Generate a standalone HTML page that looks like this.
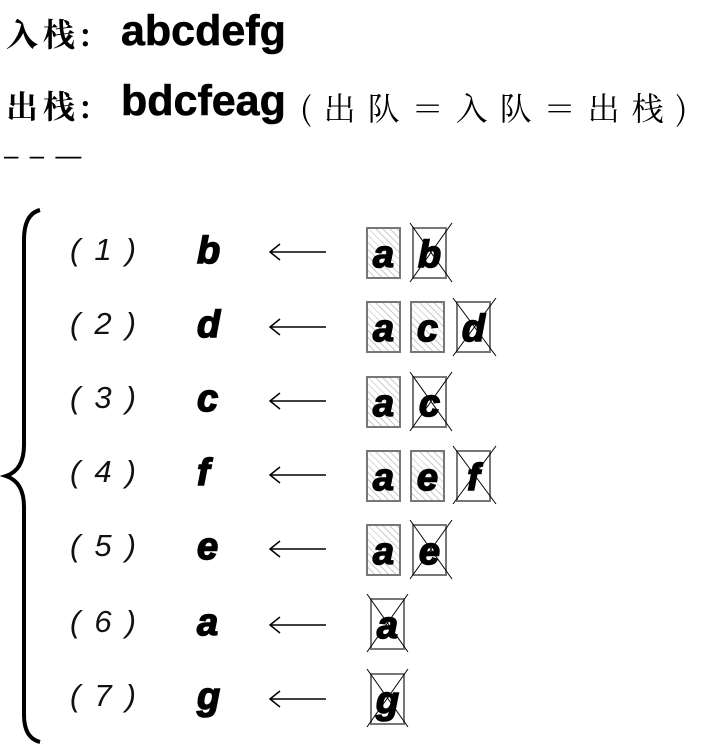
<!DOCTYPE html>
<html><head><meta charset="utf-8"><style>
body{margin:0;width:712px;height:755px;background:#fff;position:relative;overflow:hidden;font-family:"Liberation Sans",sans-serif}
.t{position:absolute;white-space:nowrap}
.h{position:absolute;font-size:43px;font-weight:bold;-webkit-text-stroke:0.6px #000}
.cj{position:absolute;font-family:"Noto Serif CJK SC","Noto Sans CJK SC",serif;font-weight:bold;font-size:32px;letter-spacing:5px;white-space:nowrap}
.lab{position:absolute;left:70px;font-size:31px;font-style:italic;letter-spacing:14px;color:#111}
.let{position:absolute;left:197px;font-size:38px;font-weight:bold;font-style:italic;-webkit-text-stroke:1.5px #000}
.box{position:absolute;width:31px;height:48px;border:2px solid #777;background:repeating-linear-gradient(45deg,#fff 0 4px,#ccc 4px 5px);font-size:38px;font-weight:bold;font-style:italic;text-align:center;line-height:52px;-webkit-text-stroke:1.5px #000}
.x{background:#fff}
</style></head><body>
<div class="cj" style="left:6px;top:10px">入栈:</div><div class="h" style="left:121px;top:7px">abcdefg</div>
<div class="cj" style="left:6px;top:82px">出栈:</div><div class="h" style="left:121px;top:77px">bdcfeag</div>
<div class="cj" style="left:300px;top:84px;font-weight:normal;letter-spacing:12px">(出队＝入队＝出栈)</div>
<div class="t" style="left:4px;top:140px;font-size:26px;letter-spacing:2px">– – —</div>
<div class="lab" style="top:232px">(1)</div><div class="let" style="top:230px">b</div>
<div class="lab" style="top:306px">(2)</div><div class="let" style="top:304px">d</div>
<div class="lab" style="top:380px">(3)</div><div class="let" style="top:378px">c</div>
<div class="lab" style="top:454px">(4)</div><div class="let" style="top:452px">f</div>
<div class="lab" style="top:528px">(5)</div><div class="let" style="top:526px">e</div>
<div class="lab" style="top:604px">(6)</div><div class="let" style="top:602px">a</div>
<div class="lab" style="top:678px">(7)</div><div class="let" style="top:676px">g</div>

<div class="box" style="left:366px;top:227px">a</div><div class="box x" style="left:412px;top:227px">b</div>
<div class="box" style="left:366px;top:301px">a</div><div class="box" style="left:410px;top:301px">c</div><div class="box x" style="left:456px;top:301px">d</div>
<div class="box" style="left:366px;top:376px">a</div><div class="box x" style="left:412px;top:376px">c</div>
<div class="box" style="left:366px;top:450px">a</div><div class="box" style="left:410px;top:450px">e</div><div class="box x" style="left:456px;top:450px">f</div>
<div class="box" style="left:366px;top:524px">a</div><div class="box x" style="left:412px;top:524px">e</div>
<div class="box x" style="left:370px;top:598px">a</div>
<div class="box x" style="left:370px;top:673px">g</div>
<svg style="position:absolute;left:0;top:0" width="712" height="755">
<path d="M40 210 Q24 214 24 240 L24 445 Q24 470 6 476 Q24 482 24 507 L24 715 Q24 738 40 742" stroke="#000" stroke-width="4" fill="none"/>
<g stroke="#000" stroke-width="1.5" fill="none">
<path d="M270 252H326M280 244L270 252L280 260"/>
<path d="M270 327H326M280 319L270 327L280 335"/>
<path d="M270 401H326M280 393L270 401L280 409"/>
<path d="M270 475H326M280 467L270 475L280 483"/>
<path d="M270 549H326M280 541L270 549L280 557"/>
<path d="M270 625H326M280 617L270 625L280 633"/>
<path d="M270 699H326M280 691L270 699L280 707"/>
</g>
<g stroke="#000" stroke-width="1">
<line x1="410" y1="223" x2="452" y2="282"/><line x1="452" y1="223" x2="410" y2="282"/>
<line x1="453" y1="298" x2="496" y2="356"/><line x1="496" y1="298" x2="453" y2="356"/>
<line x1="410" y1="372" x2="452" y2="431"/><line x1="452" y1="372" x2="410" y2="431"/>
<line x1="453" y1="446" x2="496" y2="504"/><line x1="496" y1="446" x2="453" y2="504"/>
<line x1="410" y1="520" x2="452" y2="579"/><line x1="452" y1="520" x2="410" y2="579"/>
<line x1="367" y1="594" x2="408" y2="652"/><line x1="408" y1="594" x2="367" y2="652"/>
<line x1="367" y1="669" x2="408" y2="727"/><line x1="408" y1="669" x2="367" y2="727"/>
</g></svg>
</body></html>
